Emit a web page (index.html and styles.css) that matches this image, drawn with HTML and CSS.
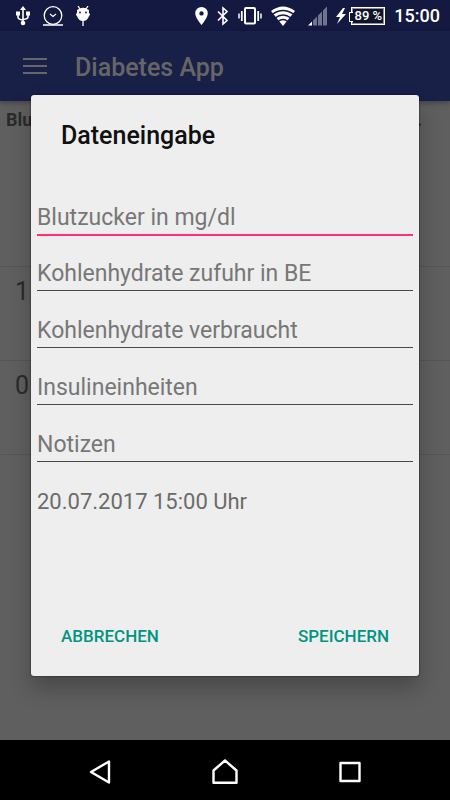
FILE: index.html
```html
<!DOCTYPE html>
<html lang="de">
<head>
<meta charset="utf-8">
<meta name="viewport" content="width=device-width, initial-scale=1">
<title>Diabetes App</title>
<link rel="stylesheet" href="styles.css">
</head>
<body>
<header class="status">
  <div class="status-group">
    <svg class="usb" width="14" height="20" viewBox="0 0 14 20" fill="none" stroke="#fff" stroke-width="1.6"><path d="M7 3v14M2 8v3q0 2.500 5 3M12 8v3q0 2-5 2.500"/><path d="M7 0 4 4h6zM0 5.500h4v4H0zM10 5.500h4v4h-4z" fill="#fff" stroke="none"/><circle cx="7" cy="17" r="2.300" fill="#fff" stroke="none"/></svg>
    <svg width="20" height="20" viewBox="0 0 20 20" fill="none" stroke="#fff" stroke-width="1.300"><circle cx="10" cy="9.500" r="8.800"/><path d="M0 19h20M7 8l3 2.500L13 8"/></svg>
    <svg width="14" height="20" viewBox="0 0 14 20"><path d="M2 0l2 3q3-1.300 6 0l2-3M7 14v6" stroke="#fff" stroke-width="1.300" fill="none"/><path d="M1 4q6-4 12 0v3q2 1.500 0 3-1.500 5-6 5t-6-5q-2-1.500 0-3z" fill="#fff"/><circle cx="4" cy="6.500" r=".9" fill="#131940"/><circle cx="10" cy="6.500" r=".9" fill="#131940"/></svg>
  </div>
  <div class="status-group">
    <svg width="13" height="20" viewBox="0 0 13 20"><path d="M6.500 1a6.300 6.300 0 0 0-6.300 6.300C.2 12 6.500 19 6.500 19s6.300-7 6.300-11.700A6.300 6.300 0 0 0 6.500 1zm0 4.200a2.200 2.200 0 1 1 0 4.400 2.200 2.200 0 0 1 0-4.400z" fill="#fff"/></svg>
    <svg width="12" height="20" viewBox="0 0 12 20" fill="none" stroke="#fff" stroke-width="1.600"><path d="M1 5.500l9 9L6 18V2l4 3.500-9 9"/></svg>
    <svg width="24" height="20" viewBox="0 0 24 20" fill="none" stroke="#fff"><rect x="7" y="2" width="10" height="15.500" rx="1" stroke-width="2"/><path d="M3.800 5v10M20.200 5v10" stroke-width="1.800"/><path d="M1 7.500v5M23 7.500v5" stroke-width="1.500"/></svg>
    <svg class="wifi" width="24" height="20" viewBox="0 0 24 20"><path d="M0 5Q12-4 24 5L12 20z" fill="#fff"/><path d="M1 8.500q11-8 22 0M4 12q8-6 16 0M7 15.500q5-4 10 0" fill="none" stroke="#131940" stroke-width="1.300"/></svg>
    <svg class="signal" width="19" height="20" viewBox="0 0 19 20"><path d="M0 19.500 4 15.500v4z" fill="#fff"/><path d="M5 14.500 9 10.500v9H5zM10 9.500l4-4v14h-4zM15 4.500l4-4v19h-4z" fill="#70748f"/></svg>
    <svg class="bolt" width="10" height="20" viewBox="0 0 10 20"><path d="M7 2 0 11h4l-3 7 9-10H6l3-6z" fill="#fff"/></svg>
    <span class="battery">89 %</span>
    <time class="clock">15:00</time>
  </div>
</header>

<div class="screen">
  <div class="appbar">
    <button class="menu" aria-label="Menü"><span></span><span></span><span></span></button>
    <h1>Diabetes App</h1>
  </div>
  <main>
    <div class="row heads"><b>Blu</b><b>.</b></div>
    <div class="row">1</div>
    <div class="row">0</div>
  </main>
  <div class="overlay">
    <form class="dialog" role="dialog" aria-labelledby="dialog-title">
      <h2 id="dialog-title">Dateneingabe</h2>
      <div class="fields">
        <input class="focused" type="text" aria-label="Blutzucker in mg/dl" placeholder="Blutzucker in mg/dl">
        <input type="text" aria-label="Kohlenhydrate zufuhr in BE" placeholder="Kohlenhydrate zufuhr in BE">
        <input type="text" aria-label="Kohlenhydrate verbraucht" placeholder="Kohlenhydrate verbraucht">
        <input type="text" aria-label="Insulineinheiten" placeholder="Insulineinheiten">
        <input type="text" aria-label="Notizen" placeholder="Notizen">
        <p class="date">20.07.2017 15:00 Uhr</p>
      </div>
      <div class="actions">
        <button type="button">ABBRECHEN</button>
        <button type="button">SPEICHERN</button>
      </div>
    </form>
  </div>
</div>

<nav class="navbar">
  <button aria-label="Zurück"><svg width="24" height="26" viewBox="0 0 24 26"><path d="M21 2.500v21L3 13z"/></svg></button>
  <button aria-label="Startseite"><svg width="26" height="26" viewBox="0 0 26 26"><path d="M13 1.500 1.500 11.500v12.300h23V11.500z"/></svg></button>
  <button aria-label="Übersicht"><svg width="24" height="26" viewBox="0 0 24 26"><path d="M2.500 4h19v18h-19z"/></svg></button>
</nav>
</body>
</html>
```

FILE: styles.css
```css
* {
  box-sizing: border-box;
}

body {
  margin: 0;
  min-height: 100vh;
  display: flex;
  flex-direction: column;
  background: #5f5f5f;
  font-family: Roboto, sans-serif;
}

button {
  border: 0;
  padding: 0;
  background: none;
  font-family: inherit;
}

svg {
  display: block;
}

.status {
  height: 31px;
  padding: 0 10px 0 16px;
  display: flex;
  align-items: center;
  justify-content: space-between;
  background: #131940;
  color: #fff;
}

.status-group {
  display: flex;
  align-items: center;
  gap: 9px;
}

.status-group:first-child {
  gap: 13px;
}

.signal {
  margin-left: 4px;
}

.bolt {
  margin-right: -4px;
}

.battery {
  position: relative;
  width: 34px;
  height: 18px;
  border: 1px solid #fff;
  outline: 1px solid #8a8c9f;
  outline-offset: -2px;
  background: #111428;
  font-size: 13px;
  font-weight: 500;
  line-height: 16px;
  text-align: center;
  white-space: nowrap;
}

.battery::before {
  content: "";
  position: absolute;
  left: -3px;
  top: 4px;
  width: 3px;
  height: 8px;
  border: 1px solid #fff;
  border-right: 0;
  background: #111428;
}

.clock {
  font-size: 18px;
  font-weight: 500;
}

.screen {
  position: relative;
  flex: 1;
  display: flex;
  flex-direction: column;
}

.appbar {
  height: 70px;
  padding: 0 23px;
  display: flex;
  align-items: center;
  gap: 28px;
  background: #192048;
  box-shadow: 0 2px 5px rgba(0, 0, 0, 0.3);
}

.menu {
  width: 24px;
  display: grid;
  gap: 5px;
}

.menu span {
  height: 2px;
  background: #666;
}

h1 {
  margin: 0;
  padding-top: 2px;
  font-size: 25px;
  font-weight: 500;
  color: #666;
}

.row {
  height: 94px;
  padding: 9px 15px;
  border-bottom: 1px solid #565656;
  font-size: 25px;
  line-height: 32px;
  color: #2a2a2a;
}

.heads {
  height: 166px;
  padding: 9px 28px 0 6px;
  display: flex;
  justify-content: space-between;
  font-size: 18px;
  line-height: 20px;
}

.overlay {
  position: absolute;
  inset: 0;
  padding: 0 31px;
  display: grid;
  align-items: center;
}

.dialog {
  border-radius: 3px;
  background: #eee;
  box-shadow: 0 0 2px rgba(0, 0, 0, 0.7), 0 12px 22px rgba(0, 0, 0, 0.25);
}

h2 {
  margin: 0;
  padding: 25px 30px 27px;
  font-size: 25px;
  line-height: 32px;
  font-weight: 500;
  color: #101010;
}

.fields {
  padding: 0 6px;
}

input {
  display: block;
  width: 100%;
  height: 35px;
  margin-top: 22px;
  padding: 0;
  border: 0;
  border-bottom: 1px solid #484848;
  border-radius: 0;
  outline: 0;
  background: none;
  font-family: inherit;
  font-size: 23px;
  color: #222;
}

input::placeholder {
  color: #777;
  opacity: 1;
}

.focused {
  margin-bottom: -1px;
  border-bottom: 2px solid #ff2e7e;
}

.focused + input {
  margin-top: 21px;
}

.date {
  margin: 24px 0 0;
  font-size: 22px;
  line-height: 32px;
  color: #6b6b6b;
}

.actions {
  padding: 94px 30px 16px;
  display: flex;
  justify-content: space-between;
}

.actions button {
  height: 48px;
  font-size: 17px;
  font-weight: 500;
  color: #009483;
}

.navbar {
  height: 60px;
  padding: 4px 37px 0;
  display: grid;
  grid-template-columns: repeat(3, 1fr);
  background: #000;
}

.navbar button {
  display: grid;
  place-items: center;
}

.navbar path {
  fill: none;
  stroke: #fff;
  stroke-width: 2.4;
  stroke-linejoin: round;
}
```
